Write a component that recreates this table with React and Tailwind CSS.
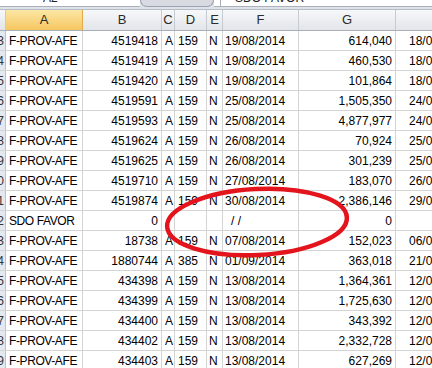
import React from "react";

const rows = [
  ["3", "F-PROV-AFE", "4519418", "A", "159", "N", "19/08/2014", "614,040", "18/08/2014"],
  ["4", "F-PROV-AFE", "4519419", "A", "159", "N", "19/08/2014", "460,530", "18/08/2014"],
  ["5", "F-PROV-AFE", "4519420", "A", "159", "N", "19/08/2014", "101,864", "18/08/2014"],
  ["6", "F-PROV-AFE", "4519591", "A", "159", "N", "25/08/2014", "1,505,350", "24/08/2014"],
  ["7", "F-PROV-AFE", "4519593", "A", "159", "N", "25/08/2014", "4,877,977", "24/08/2014"],
  ["8", "F-PROV-AFE", "4519624", "A", "159", "N", "26/08/2014", "70,924", "25/08/2014"],
  ["9", "F-PROV-AFE", "4519625", "A", "159", "N", "26/08/2014", "301,239", "25/08/2014"],
  ["0", "F-PROV-AFE", "4519710", "A", "159", "N", "27/08/2014", "183,070", "26/08/2014"],
  ["1", "F-PROV-AFE", "4519874", "A", "159", "N", "30/08/2014", "2,386,146", "29/08/2014"],
  ["2", "SDO FAVOR", "0", "", "", "", "/ /", "0", ""],
  ["3", "F-PROV-AFE", "18738", "A", "159", "N", "07/08/2014", "152,023", "06/08/2014"],
  ["4", "F-PROV-AFE", "1880744", "A", "385", "N", "01/09/2014", "363,018", "21/08/2014"],
  ["5", "F-PROV-AFE", "434398", "A", "159", "N", "13/08/2014", "1,364,361", "12/08/2014"],
  ["6", "F-PROV-AFE", "434399", "A", "159", "N", "13/08/2014", "1,725,630", "12/08/2014"],
  ["7", "F-PROV-AFE", "434400", "A", "159", "N", "13/08/2014", "343,392", "12/08/2014"],
  ["8", "F-PROV-AFE", "434402", "A", "159", "N", "13/08/2014", "2,332,728", "12/08/2014"],
  ["9", "F-PROV-AFE", "434403", "A", "159", "N", "13/08/2014", "627,269", "12/08/2014"],
];

const cell = "h-full shrink-0 border-r border-[#d4d4d4] flex items-center overflow-hidden whitespace-nowrap";

function Row({ r }) {
  return (
    <div className="flex h-[20px] border-b border-[#d4d4d4] text-[12px] text-black">
      <div className="h-full w-[6px] shrink-0 bg-[#e4e9ef] border-r border-[#b9c1cc] flex items-center justify-end overflow-hidden pr-[1px] text-[#333] text-[12px]">
        <span>1{r[0]}</span>
      </div>
      <div className={`${cell} w-[77px] pl-[3px] tracking-[-0.4px]`}>{r[1]}</div>
      <div className={`${cell} w-[79px] justify-end pr-[3px]`}>{r[2]}</div>
      <div className={`${cell} w-[13px] pl-[3px]`}>{r[3]}</div>
      <div className={`${cell} w-[32px] pl-[3px]`}>{r[4]}</div>
      <div className={`${cell} w-[16px] pl-[2px]`}>{r[5]}</div>
      <div className={`${cell} w-[76px] ${r[6] === "/ /" ? "pl-[8px]" : "pl-[2px]"}`}>{r[6]}</div>
      <div className={`${cell} w-[97px] justify-end pr-[3px]`}>{r[7]}</div>
      <div className={`${cell} w-[100px] pl-[13px]`}>{r[8]}</div>
    </div>
  );
}

const hcell = "h-full shrink-0 border-r border-[#c6cbd2] flex items-center justify-center text-[13px] text-[#2b2b2b]";

export default function App() {
  return (
    <div className="relative w-[432px] h-[368px] overflow-hidden bg-white" style={{ fontFamily: '"Liberation Sans", Arial, sans-serif' }}>
      {/* formula bar remnant */}
      <div className="flex h-[10px] bg-[#dfe3e9] border-b border-[#b4bcc6]">
        <div className="w-[140px] h-[7px] bg-white border-b border-[#a9b0b9] overflow-hidden">
          <div className="pl-[43px] -mt-[9px] text-[12px] leading-[14px] text-[#222]">A2</div>
        </div>
        <div className="w-[74px] h-[7px] bg-[#d7dbe1] border border-t-0 border-[#9aa2ad] rounded-b-[8px]"></div>
        <div className="w-[6px] h-[7px] bg-white border-b border-[#a9b0b9]"></div>
        <div className="flex-1 h-[7px] bg-white border-l border-b border-[#a9b0b9] overflow-hidden">
          <div className="pl-[14px] -mt-[9px] text-[12px] leading-[14px] text-[#222]">SDO FAVOR</div>
        </div>
      </div>
      {/* column headers */}
      <div className="flex h-[21px] bg-gradient-to-b from-[#f7f8fa] to-[#e2e5e9] border-b border-[#a8b0bb]">
        <div className="h-full w-[6px] shrink-0 border-r border-[#c6cbd2]"></div>
        <div className="h-full w-[77px] shrink-0 border-r border-[#e3a94a] bg-gradient-to-b from-[#fbe7a4] to-[#f6c65f] flex items-center justify-center text-[13px] text-[#2b2b2b]">A</div>
        <div className={`${hcell} w-[79px]`}>B</div>
        <div className={`${hcell} w-[13px]`}>C</div>
        <div className={`${hcell} w-[32px]`}>D</div>
        <div className={`${hcell} w-[16px]`}>E</div>
        <div className={`${hcell} w-[76px]`}>F</div>
        <div className={`${hcell} w-[97px]`}>G</div>
        <div className={`${hcell} w-[100px]`}>H</div>
      </div>
      {rows.map((r, i) => (
        <Row key={i} r={r} />
      ))}
      {/* red ellipse annotation */}
      <svg className="absolute left-0 top-0 pointer-events-none" width="432" height="368" viewBox="0 0 432 368">
        <ellipse cx="257" cy="222" rx="90" ry="33" fill="none" stroke="#e3141c" strokeWidth="4.5" transform="rotate(-3 257 222)" />
      </svg>
    </div>
  );
}
